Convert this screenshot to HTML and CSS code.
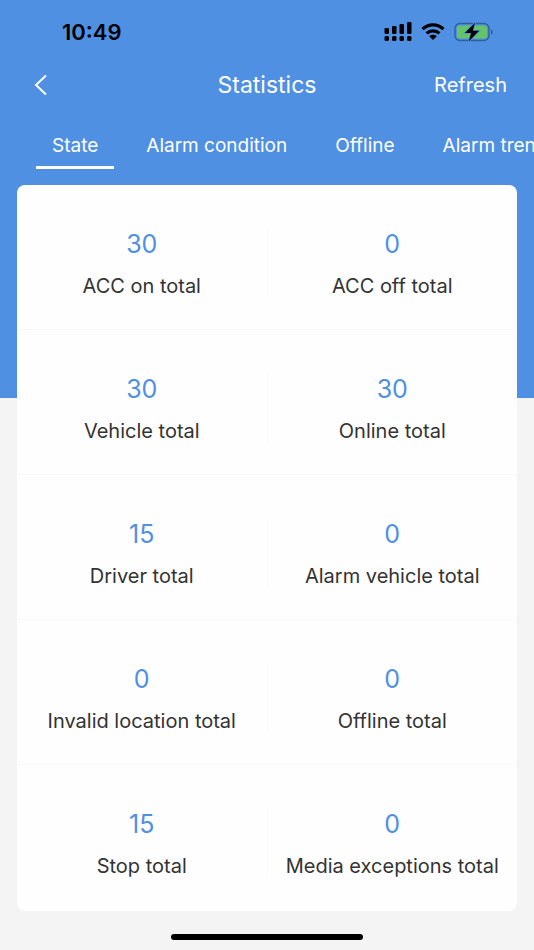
FILE: index.html
```html
<!DOCTYPE html>
<html lang="en">
<head>
    <meta charset="UTF-8">
    <meta name="viewport" content="width=device-width, initial-scale=1.0">
    <title>Statistics</title>
    <link rel="stylesheet" href="styles.css">
</head>
<body>
    <!-- Status bar -->
    <div class="status-bar">
        <span class="time">10:49</span>
        <div class="status-icons">
            <svg width="28" height="20" viewBox="0 0 28 20">
                <rect x="0.5" y="6" width="4.5" height="6" rx="1.2"/>
                <rect x="8" y="4" width="4.5" height="8" rx="1.2"/>
                <rect x="15.5" y="2" width="4.5" height="10" rx="1.2"/>
                <rect x="23" y="0" width="4.5" height="12" rx="1.2"/>
                <rect x="0.5" y="14" width="4.5" height="5" rx="1.5"/>
                <rect x="8" y="14" width="4.5" height="5" rx="1.5"/>
                <rect x="15.5" y="14" width="4.5" height="5" rx="1.5"/>
                <rect x="23" y="14" width="4.5" height="5" rx="1.5"/>
            </svg>
            <svg width="24" height="20" viewBox="0 0 24 20">
                <path d="M1.5 7.2a15 15 0 0 1 21 0M5.6 11.4a9.2 9.2 0 0 1 12.8 0" fill="none" stroke="#000" stroke-width="3.2"/>
                <path d="M8.2 14.2a5.6 5.6 0 0 1 7.6 0L12 18z"/>
            </svg>
            <svg width="40" height="20" viewBox="0 0 40 20">
                <rect x="1" y="1.5" width="34" height="17" rx="5" fill="none" stroke="#305f9f" stroke-width="1.4"/>
                <rect x="3" y="3.5" width="30" height="13" rx="3" fill="#65c466"/>
                <path d="M37 7.2c2.4 1 2.4 4.6 0 5.6z" fill="#305f9f"/>
                <path d="M21 .8L10.8 11h6.4l-2.6 8.4L25.2 8.8h-6.4z" stroke="#4f90e3" stroke-width="1.6" paint-order="stroke"/>
            </svg>
        </div>
    </div>

    <header class="nav-bar">
        <button type="button" class="back" aria-label="Back">
            <svg width="14" height="22" viewBox="0 0 14 22">
                <path d="M12 1.5L2 11l10 9.5" fill="none" stroke="#fff" stroke-width="2"/>
            </svg>
        </button>
        <h1>Statistics</h1>
        <button type="button" class="refresh">Refresh</button>
    </header>

    <nav class="tabs">
        <button type="button" class="tab active">State</button>
        <button type="button" class="tab">Alarm condition</button>
        <button type="button" class="tab">Offline</button>
        <button type="button" class="tab">Alarm trend</button>
    </nav>

    <!-- Totals -->
    <main class="card">
        <div class="row">
            <div class="cell"><span class="value">30</span><span class="label">ACC on total</span></div>
            <div class="cell"><span class="value">0</span><span class="label">ACC off total</span></div>
        </div>
        <div class="row">
            <div class="cell"><span class="value">30</span><span class="label">Vehicle total</span></div>
            <div class="cell"><span class="value">30</span><span class="label">Online total</span></div>
        </div>
        <div class="row">
            <div class="cell"><span class="value">15</span><span class="label">Driver total</span></div>
            <div class="cell"><span class="value">0</span><span class="label">Alarm vehicle total</span></div>
        </div>
        <div class="row">
            <div class="cell"><span class="value">0</span><span class="label">Invalid location total</span></div>
            <div class="cell"><span class="value">0</span><span class="label">Offline total</span></div>
        </div>
        <div class="row">
            <div class="cell"><span class="value">15</span><span class="label">Stop total</span></div>
            <div class="cell"><span class="value">0</span><span class="label">Media exceptions total</span></div>
        </div>
    </main>

    <div class="home-indicator"></div>
</body>
</html>
```
FILE: styles.css
```css
* {
    box-sizing: border-box;
}

body {
    margin: 0;
    font-family: Inter, sans-serif;
    color: #333;
    background: #f4f4f4 linear-gradient(#4f90e3, #4f90e3) no-repeat 0 0 / 100% 398px;
}

h1 {
    margin: 0;
    font-size: 23px;
    font-weight: 400;
}

button {
    padding: 0;
    border: none;
    background: none;
    color: #fff;
    font-family: inherit;
    cursor: pointer;
}

svg {
    display: block;
}

.status-bar {
    display: flex;
    justify-content: space-between;
    align-items: center;
    height: 64px;
    padding: 0 40px 0 62px;
    color: #000;
}

.time {
    font-size: 22px;
    font-weight: 600;
}

.status-icons {
    display: flex;
    gap: 9px;
}

.nav-bar {
    display: grid;
    grid-template-columns: 1fr auto 1fr;
    align-items: center;
    height: 42px;
    padding: 0 27px;
    color: #fff;
}

.back {
    justify-self: start;
    padding: 0 7px;
}

.refresh {
    justify-self: end;
    font-size: 20px;
}

.tabs {
    display: flex;
    gap: 16px;
    height: 63px;
    padding: 20px 0 0 36px;
    margin-bottom: 16px;
    overflow: hidden;
}

.tab {
    flex: none;
    height: 43px;
    padding: 0 16px 1px;
    border-bottom: 3px solid transparent;
    font-size: 19px;
}

.tab.active {
    border-bottom-color: #fff;
}

.card {
    margin: 0 17px;
    padding-bottom: 2px;
    background: #fefefe;
    border-radius: 8px;
}

.row {
    display: flex;
    padding: 43px 0 31px;
    border-bottom: 1px solid #f7f7f7;
}

.row:last-child {
    border-bottom: none;
}

.cell {
    flex: 1 1 0;
    display: flex;
    flex-direction: column;
    align-items: center;
    gap: 10px;
    height: 70px;
    white-space: nowrap;
}

.cell + .cell {
    border-left: 1px solid #fafafa;
}

.value {
    color: #4f90e3;
    font-size: 25px;
    line-height: 32px;
}

.label {
    font-size: 20px;
    line-height: 32px;
}

.home-indicator {
    width: 36%;
    height: 6px;
    margin: 23px auto 10px;
    border-radius: 3px;
    background: #000;
}
```
